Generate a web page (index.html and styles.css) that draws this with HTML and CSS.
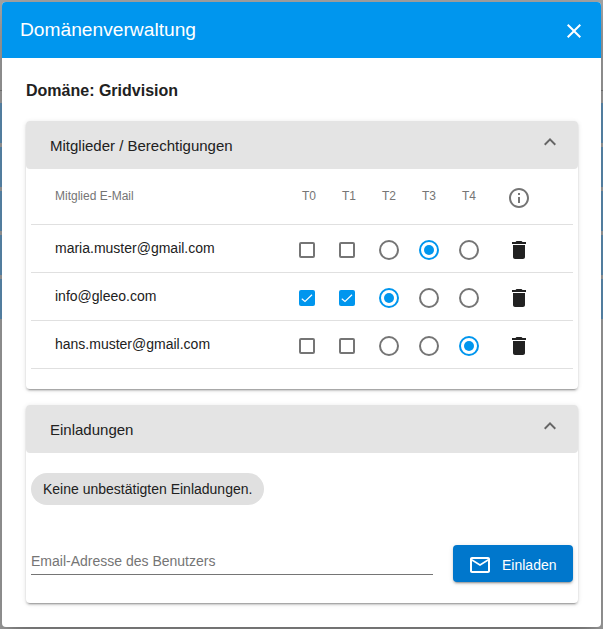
FILE: index.html
```html
<!DOCTYPE html>
<html lang="de">
<head>
<meta charset="utf-8">
<title>Domänenverwaltung</title>
<link rel="stylesheet" href="styles.css">
</head>
<body>
<svg class="sprites" width="0" height="0" aria-hidden="true">
  <symbol id="i-close" viewBox="0 0 24 24"><path d="M19 6.41 17.59 5 12 10.59 6.41 5 5 6.41 10.59 12 5 17.59 6.41 19 12 13.41 17.59 19 19 17.59 13.41 12z"/></symbol>
  <symbol id="i-less" viewBox="0 0 24 24"><path d="M12 8l-6 6 1.41 1.41L12 10.83l4.59 4.58L18 14z"/></symbol>
  <symbol id="i-info" viewBox="0 0 24 24"><path d="M11 7h2v2h-2zm0 4h2v6h-2zm1-9C6.48 2 2 6.48 2 12s4.48 10 10 10 10-4.48 10-10S17.52 2 12 2zm0 18c-4.41 0-8-3.59-8-8s3.59-8 8-8 8 3.59 8 8-3.59 8-8 8z"/></symbol>
  <symbol id="i-trash" viewBox="0 0 24 24"><path d="M6 19c0 1.1.9 2 2 2h8c1.1 0 2-.9 2-2V7H6v12zM19 4h-3.5l-1-1h-5l-1 1H5v2h14V4z"/></symbol>
  <symbol id="i-mail" viewBox="0 0 24 24"><path d="M20 4H4c-1.1 0-2 .9-2 2v12c0 1.1.9 2 2 2h16c1.1 0 2-.9 2-2V6c0-1.1-.9-2-2-2zm0 14H4V8l8 5 8-5v10zm-8-7L4 6h16l-8 5z"/></symbol>
  <symbol id="i-box" viewBox="0 0 16 16"><rect x="1" y="1" width="14" height="14" rx="1" fill="none" stroke="currentColor" stroke-width="2"/></symbol>
  <symbol id="i-boxc" viewBox="0 0 16 16"><rect width="16" height="16" rx="2" fill="currentColor"/><path d="M2.8 8.8 6 11.4 13 4.8" fill="none" stroke="#fff" stroke-width="1.2"/></symbol>
  <symbol id="i-radio" viewBox="0 0 20 20"><circle cx="10" cy="10" r="9" fill="none" stroke="currentColor" stroke-width="2"/></symbol>
  <symbol id="i-radioc" viewBox="0 0 20 20"><circle cx="10" cy="10" r="9" fill="none" stroke="currentColor" stroke-width="2"/><circle cx="10" cy="10" r="5" fill="currentColor"/></symbol>
</svg>

<div class="backdrop" aria-hidden="true">
  <div class="rule"></div>
  <div class="strip"></div><div class="strip"></div><div class="strip"></div><div class="strip"></div><div class="strip"></div>
</div>

<main class="dialog">
  <header class="dialog-head">
    <h1 class="dialog-title">Domänenverwaltung</h1>
    <svg class="icon close"><use href="#i-close"/></svg>
  </header>
  <div class="dialog-body">
    <h2 class="domain">Domäne: Gridvision</h2>

    <section class="card">
      <div class="card-head">
        <h3 class="card-title">Mitglieder / Berechtigungen</h3>
        <svg class="icon chevron"><use href="#i-less"/></svg>
      </div>
      <div class="table">
        <div class="row row-head">
          <span class="email-head">Mitglied E-Mail</span>
          <span class="th">T0</span><span class="th">T1</span><span class="th">T2</span><span class="th">T3</span><span class="th">T4</span>
          <span class="action"><svg class="icon info"><use href="#i-info"/></svg></span>
        </div>
        <div class="row">
          <span class="email">maria.muster@gmail.com</span>
          <span class="cell cell-box"><svg class="box"><use href="#i-box"/></svg></span>
          <span class="cell cell-box"><svg class="box"><use href="#i-box"/></svg></span>
          <span class="cell"><svg class="radio"><use href="#i-radio"/></svg></span>
          <span class="cell"><svg class="radio on"><use href="#i-radioc"/></svg></span>
          <span class="cell"><svg class="radio"><use href="#i-radio"/></svg></span>
          <span class="action"><svg class="icon trash"><use href="#i-trash"/></svg></span>
        </div>
        <div class="row">
          <span class="email">info@gleeo.com</span>
          <span class="cell cell-box"><svg class="box on"><use href="#i-boxc"/></svg></span>
          <span class="cell cell-box"><svg class="box on"><use href="#i-boxc"/></svg></span>
          <span class="cell"><svg class="radio on"><use href="#i-radioc"/></svg></span>
          <span class="cell"><svg class="radio"><use href="#i-radio"/></svg></span>
          <span class="cell"><svg class="radio"><use href="#i-radio"/></svg></span>
          <span class="action"><svg class="icon trash"><use href="#i-trash"/></svg></span>
        </div>
        <div class="row">
          <span class="email">hans.muster@gmail.com</span>
          <span class="cell cell-box"><svg class="box"><use href="#i-box"/></svg></span>
          <span class="cell cell-box"><svg class="box"><use href="#i-box"/></svg></span>
          <span class="cell"><svg class="radio"><use href="#i-radio"/></svg></span>
          <span class="cell"><svg class="radio"><use href="#i-radio"/></svg></span>
          <span class="cell"><svg class="radio on"><use href="#i-radioc"/></svg></span>
          <span class="action"><svg class="icon trash"><use href="#i-trash"/></svg></span>
        </div>
      </div>
    </section>

    <section class="card card-invite">
      <div class="card-head">
        <h3 class="card-title">Einladungen</h3>
        <svg class="icon chevron"><use href="#i-less"/></svg>
      </div>
      <div class="invite">
        <div class="chip">Keine unbestätigten Einladungen.</div>
        <div class="invite-form">
          <input class="field" type="text" placeholder="Email-Adresse des Benutzers">
          <button class="btn" type="button"><svg class="icon mail"><use href="#i-mail"/></svg><span>Einladen</span></button>
        </div>
      </div>
    </section>
  </div>
</main>
</body>
</html>
```
FILE: styles.css
```css
* { box-sizing: border-box; }
html, body { margin: 0; height: 100%; }
body {
  position: relative;
  height: 629px;
  overflow: hidden;
  padding: 2px;
  background: #a8a8a8;
  font-family: "Liberation Sans", Arial, sans-serif;
  color: #212121;
}
.sprites { position: absolute; }
.backdrop {
  position: absolute;
  inset: 0;
  display: flex;
  flex-direction: column;
  gap: 4px;
  padding-top: 90px;
}
.rule { height: 1px; margin-bottom: 8px; background: #808080; }
.strip { height: 40px; background: #6398c0; }

.dialog {
  position: relative;
  display: flex;
  flex-direction: column;
  height: 625px;
  background: #fff;
  border-radius: 4px;
  overflow: hidden;
  box-shadow: 0 11px 15px -7px rgba(0, 0, 0, .2), 0 24px 38px 3px rgba(0, 0, 0, .14), 0 9px 46px 8px rgba(0, 0, 0, .12);
}
.dialog-head {
  display: flex;
  align-items: center;
  justify-content: space-between;
  flex: none;
  height: 56px;
  padding: 0 15px 0 18px;
  background: #0096ee;
  color: #fff;
}
.dialog-title { margin: 0; font-size: 19.2px; font-weight: 400; line-height: 56px; }
.icon { display: block; width: 24px; height: 24px; fill: currentColor; }
.close { margin-top: 2px; }

.dialog-body { padding: 24px 23px 0 24px; }
.domain { margin: 0 0 21px; font-size: 16px; font-weight: 700; line-height: 18px; }

.card {
  background: #fff;
  border-radius: 4px;
  box-shadow: 0 3px 1px -2px rgba(0, 0, 0, .2), 0 2px 2px 0 rgba(0, 0, 0, .14), 0 1px 5px 0 rgba(0, 0, 0, .12);
}
.card-invite { margin-top: 16px; }
.card-head {
  display: flex;
  justify-content: space-between;
  height: 48px;
  padding: 9px 16px 0 24px;
  background: #e4e4e4;
  border-radius: 4px;
}
.card-title { margin: 0; font-size: 15px; font-weight: 400; line-height: 31px; }
.chevron { color: #666; }

.table { padding: 0 5px 20px; }
.row {
  display: grid;
  grid-template-columns: 258px repeat(5, 40px) 60px;
  align-items: center;
  height: 48px;
  border-bottom: 1px solid #e0e0e0;
}
.row-head { height: 56px; }
.email-head { padding: 0 0 2px 24px; font-size: 12px; color: #757575; }
.th { margin-bottom: 2px; font-size: 12px; color: #757575; text-align: center; }
.email { padding: 0 0 1px 24px; font-size: 14px; line-height: 16px; }
.cell { display: flex; justify-content: center; padding-top: 2px; }
.cell-box { padding-right: 4px; }
.box { display: block; width: 16px; height: 16px; color: #757575; }
.radio { display: block; width: 20px; height: 20px; color: #757575; }
.box.on, .radio.on { color: #0096ee; }
.action { display: flex; justify-content: center; padding-top: 2px; }
.info { color: #757575; }
.row-head .action { padding-top: 2px; }
.trash { color: #212121; }

.invite { height: 150px; padding: 20px 5px 0; }
.chip {
  width: max-content;
  height: 32px;
  padding: 0 12px;
  border-radius: 16px;
  background: #e0e0e0;
  font-size: 14px;
  line-height: 32px;
}
.invite-form { display: flex; align-items: flex-start; gap: 20px; margin-top: 40px; }
.field {
  flex: 1;
  height: 30px;
  padding: 4px 0 1px;
  border: 0;
  border-bottom: 1px solid #757575;
  outline: 0;
  background: none;
  font: 14px "Liberation Sans", Arial, sans-serif;
}
.field::placeholder { color: #757575; opacity: 1; }
.btn {
  display: flex;
  align-items: center;
  gap: 10px;
  flex: none;
  width: 120px;
  height: 37px;
  padding: 3px 0 0 15px;
  border: 0;
  border-radius: 4px;
  background: #0077cc;
  color: #fff;
  font: 14px "Liberation Sans", Arial, sans-serif;
  box-shadow: 0 3px 1px -2px rgba(0, 0, 0, .2), 0 2px 2px 0 rgba(0, 0, 0, .14), 0 1px 5px 0 rgba(0, 0, 0, .12);
}
```
